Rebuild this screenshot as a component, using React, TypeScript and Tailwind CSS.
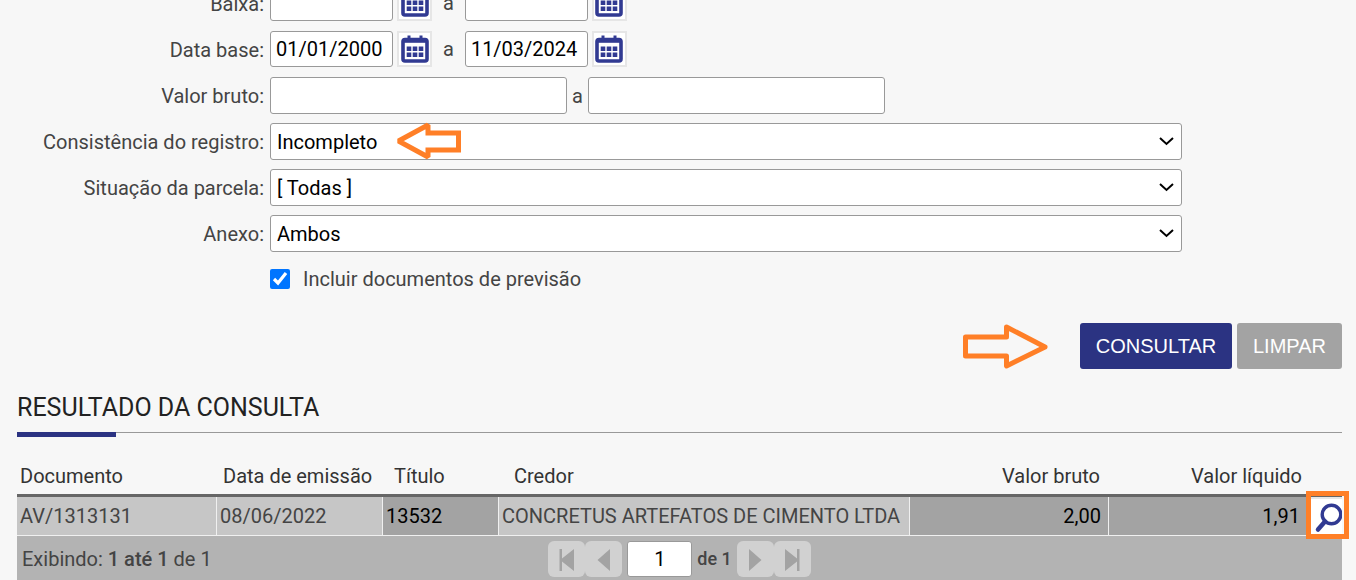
import { useState } from "react";

const CalendarIcon = () => (
    <svg width="28" height="28" viewBox="0 0 28 28" fill="none" className="shrink-0">
        <rect x="2" y="4.500" width="24" height="21.500" rx="2" stroke="#313a92" strokeWidth="3.600" />
        <path d="M2 6h24" stroke="#313a92" strokeWidth="3.600" />
        <path d="M8 0.500v5M20 0.500v5" stroke="#313a92" strokeWidth="3" />
        <path d="M5.700 11.500h4.600v4.600h-4.600zM11.700 11.500h4.600v4.600h-4.600zM17.700 11.500h4.600v4.600h-4.600zM5.700 17.500h4.600v4.600h-4.600zM11.700 17.500h4.600v4.600h-4.600zM17.700 17.500h4.600v4.600h-4.600z" fill="#313a92" />
    </svg>
);

const SearchIcon = () => (
    <svg width="34" height="36" viewBox="0 0 34 36" fill="none" stroke="#313a92">
        <circle cx="23.500" cy="14.500" r="9.300" strokeWidth="3.400" />
        <path d="M17 21.500L10 29.500" strokeWidth="4.500" strokeLinecap="round" />
    </svg>
);

const paths = {
    first: "M11.500 8h2.500v9.500l12 -9.500v22l-12 -9.500v9.500h-2.500z",
    prev: "M25 8v22l-12.500 -11z",
    next: "M12 8v22l12.500 -11z",
    last: "M25.500 8h-2.500v9.500l-12 -9.500v22l12 -9.500v9.500h2.500z",
};

const DateField = ({ label, value }: { label: string; value: string }) => {
    const [date, setDate] = useState(value);
    return (
        <div className="flex items-center gap-1">
            <input
                aria-label={label}
                value={date}
                onChange={(e) => setDate(e.target.value)}
                className="h-9 w-[123px] rounded-[3px] border border-[#999] bg-white px-[5px] text-black"
            />
            <button aria-label={`Calendário ${label}`} className="flex h-9 w-[35px] items-center justify-center border-2 border-[#e6e6e6] bg-white">
                <CalendarIcon />
            </button>
        </div>
    );
};

const DateRow = ({ label, from, to }: { label: string; from: string; to: string }) => (
    <div className="flex h-[37px] items-start gap-[6px]">
        <span className="w-[247px] text-right leading-[39px]">{label}:</span>
        <div className="flex items-center gap-[11px]">
            <DateField label={`${label} inicial`} value={from} />
            <span>a</span>
            <DateField label={`${label} final`} value={to} />
        </div>
    </div>
);

const SelectRow = ({ id, label, options }: { id: string; label: string; options: string[] }) => (
    <div className="flex h-[37px] items-start gap-[6px] pr-40">
        <label htmlFor={id} className="w-[247px] text-right leading-[39px]">{label}:</label>
        <div className="relative flex-1">
            <select id={id} className="block h-[37px] w-full appearance-none rounded-[3px] border border-[#999] bg-white px-[6px] text-black">
                {options.map((option) => (
                    <option key={option}>{option}</option>
                ))}
            </select>
            <svg className="pointer-events-none absolute top-[14px] right-2" width="15" height="9" viewBox="0 0 15 9" fill="none">
                <path d="M1 1l6.500 6l6.500 -6" stroke="#000" strokeWidth="2" />
            </svg>
            {id === "consistencia" && (
                <svg className="pointer-events-none absolute -top-[2px] left-[126px]" width="66" height="40" viewBox="0 0 66 40" fill="none">
                    <path d="M2.500 20L32 4v8h30.500v17h-30.500v7z" stroke="#ff7f27" strokeWidth="5" strokeMiterlimit="1.500" />
                </svg>
            )}
        </div>
    </div>
);

const PageButton = ({ label, path }: { label: string; path: string }) => (
    <button aria-label={label} className="h-9 w-[37px] rounded-md bg-[#d1d1d1]">
        <svg width="37" height="36" viewBox="0 0 37 36">
            <path d={path} fill="#a3a3a3" />
        </svg>
    </button>
);

const cell = "border-r border-b border-[#f0f0f0] pr-[7px] pl-[3px]";

export default function App() {
    const [previsao, setPrevisao] = useState(true);
    const [pagina, setPagina] = useState("1");
    return (
        <main className="min-h-screen overflow-hidden bg-[#f7f7f7] pr-[14px] pl-[17px] font-[Roboto,sans-serif] text-[20px] leading-6 text-[#444]">
            {/* Filtros */}
            <form className="-mt-[15px] flex flex-col gap-[9px]" onSubmit={(e) => e.preventDefault()}>
                <DateRow label="Baixa" from="" to="" />
                <DateRow label="Data base" from="01/01/2000" to="11/03/2024" />
                <div className="flex h-[37px] items-start gap-[6px]">
                    <label htmlFor="bruto-de" className="w-[247px] text-right leading-[39px]">Valor bruto:</label>
                    <div className="flex items-center gap-[5px]">
                        <input id="bruto-de" className="h-[37px] w-[297px] rounded-[3px] border border-[#999] bg-white px-[5px] text-black" />
                        <label htmlFor="bruto-ate">a</label>
                        <input id="bruto-ate" className="h-[37px] w-[297px] rounded-[3px] border border-[#999] bg-white px-[5px] text-black" />
                    </div>
                </div>
                <SelectRow id="consistencia" label="Consistência do registro" options={["Incompleto", "Completo"]} />
                <SelectRow id="situacao" label="Situação da parcela" options={["[ Todas ]"]} />
                <SelectRow id="anexo" label="Anexo" options={["Ambos"]} />
                <label className="flex h-9 items-center gap-[13px] pl-[253px]">
                    <input
                        type="checkbox"
                        checked={previsao}
                        onChange={(e) => setPrevisao(e.target.checked)}
                        className="size-5 accent-[#0075ff]"
                    />
                    Incluir documentos de previsão
                </label>
                {/* Botões */}
                <div className="mt-[17px] flex items-center justify-end gap-[5px] font-['Liberation_Sans',sans-serif] text-white">
                    <svg className="mr-[25px]" width="88" height="46" viewBox="0 0 88 46" fill="none">
                        <path d="M3.500 14h41v-10L83 24L44.500 43v-10h-41z" stroke="#ff7f27" strokeWidth="5" strokeLinejoin="round" />
                    </svg>
                    <button className="h-[46px] w-[152px] rounded-[3px] bg-[#2b3382]">CONSULTAR</button>
                    <button type="reset" className="h-[46px] w-[105px] rounded-[3px] bg-[#a3a3a3]">LIMPAR</button>
                </div>
            </form>

            {/* Resultado */}
            <h2 className="mt-[25px] text-[25px] leading-7 text-[#222]">RESULTADO DA CONSULTA</h2>
            <div className="mt-[10px] h-[5px] border-t border-[#999]">
                <div className="-mt-px h-[5px] w-[99px] bg-[#2b3382]" />
            </div>
            <table className="mt-5 w-full table-fixed border-separate border-spacing-0">
                <colgroup>
                    <col className="w-[200px]" />
                    <col className="w-[166px]" />
                    <col className="w-[116px]" />
                    <col />
                    <col className="w-[199px]" />
                    <col className="w-[199px]" />
                    <col className="w-[34px]" />
                </colgroup>
                <thead>
                    <tr className="h-10 text-left text-[#333] *:border-b-[3px] *:border-[#666] *:font-normal *:whitespace-nowrap">
                        <th className="pl-[3px]">Documento</th>
                        <th className="pl-[6px]">Data de emissão</th>
                        <th className="pl-[11px]">Título</th>
                        <th className="pl-[15px]">Credor</th>
                        <th className="pr-[9px] text-right">Valor bruto</th>
                        <th className="pr-[6px] text-right">Valor líquido</th>
                        <th aria-label="Ações" />
                    </tr>
                </thead>
                <tbody>
                    <tr className="h-[39px] bg-[#c6c6c6]">
                        <td className={cell}>AV/1313131</td>
                        <td className={cell}>08/06/2022</td>
                        <td className={`${cell} bg-[#a3a3a3] text-black`}>13532</td>
                        <td className={`${cell} whitespace-nowrap`}>CONCRETUS ARTEFATOS DE CIMENTO LTDA</td>
                        <td className={`${cell} bg-[#a3a3a3] text-right text-black`}>2,00</td>
                        <td className={`${cell} bg-[#a3a3a3] text-right text-black`}>1,91</td>
                        <td className="relative border-t-2 border-[#e6e6e6] bg-white">
                            <button aria-label="Detalhar" className="block">
                                <SearchIcon />
                            </button>
                            <span className="pointer-events-none absolute -top-2 -right-[7px] h-12 w-[43px] border-[5px] border-[#ff7f27]" />
                        </td>
                    </tr>
                </tbody>
            </table>
            <div className="grid h-11 grid-cols-[1fr_auto_1fr] items-center bg-[#b3b3b3] px-[5px] pt-[2px]">
                <span>
                    Exibindo: <b className="font-medium">1 até 1</b> de 1
                </span>
                <div className="flex items-center gap-[5px]">
                    <div className="flex">
                        <PageButton label="Primeira" path={paths.first} />
                        <PageButton label="Anterior" path={paths.prev} />
                    </div>
                    <input
                        aria-label="Página"
                        value={pagina}
                        onChange={(e) => setPagina(e.target.value)}
                        className="h-9 w-[65px] rounded-[3px] border border-[#999] bg-white text-center text-black"
                    />
                    <span className="text-[18px] font-medium">de 1</span>
                    <div className="flex">
                        <PageButton label="Próxima" path={paths.next} />
                        <PageButton label="Última" path={paths.last} />
                    </div>
                </div>
            </div>
        </main>
    );
}
